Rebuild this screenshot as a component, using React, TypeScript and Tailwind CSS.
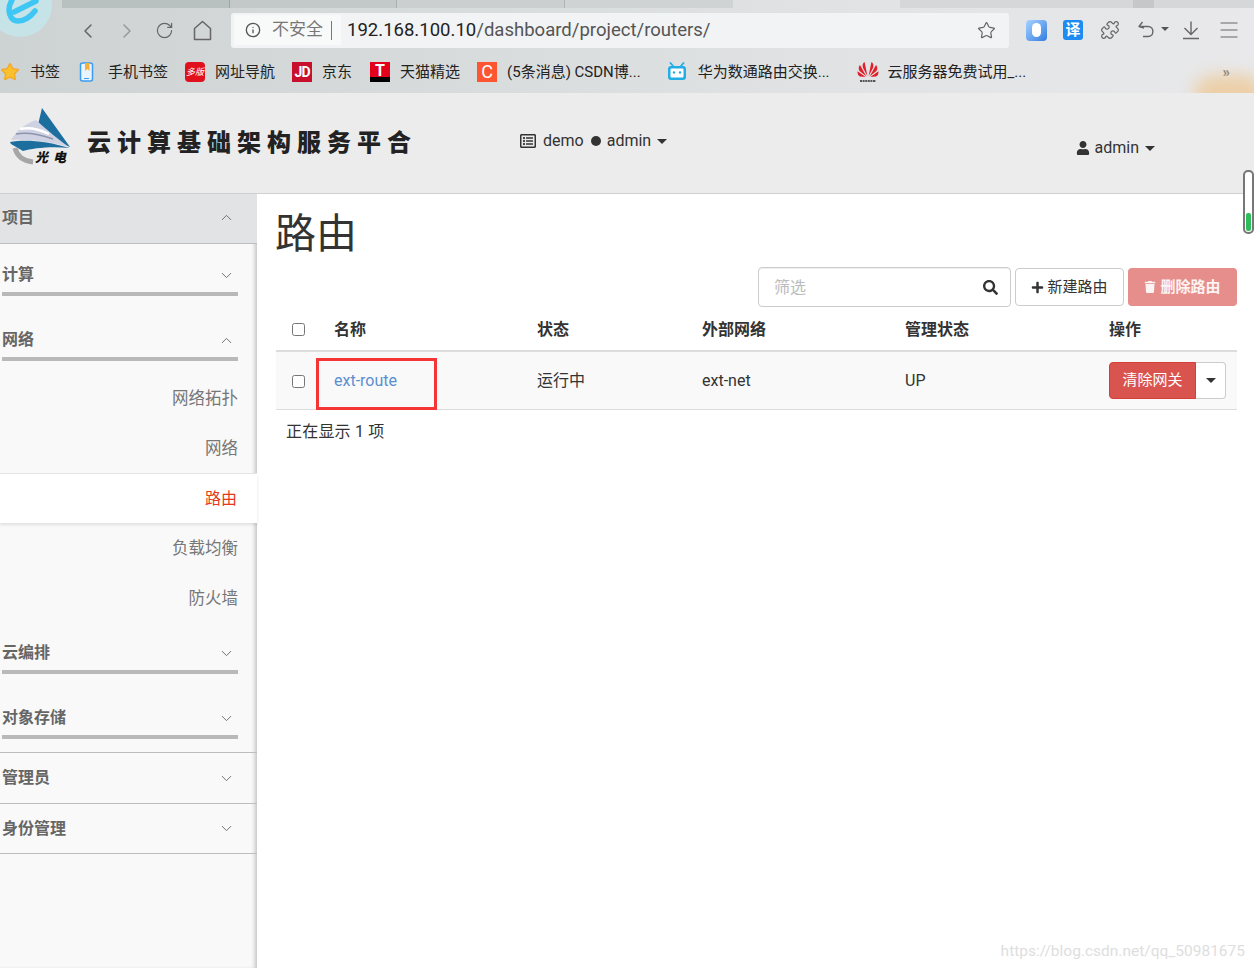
import React from 'react';
import { ChevronLeft, ChevronRight, RotateCw, Star, Puzzle, Menu, Info, ChevronUp, ChevronDown } from 'lucide-react';
import { FaUser, FaTrash, FaPlus, FaSearch, FaRegListAlt } from 'react-icons/fa';

const Caret = ({ className = '' }: { className?: string }) => (
  <span className={`inline-block w-0 h-0 border-x-[5px] border-x-transparent border-t-[5px] border-t-[#333] ${className}`} />
);

const Logo = () => (
  <svg width="62" height="60" viewBox="0 0 62 60" className="shrink-0">
    <path d="M33 2 L61 41 L27 27 Z" fill="#1c6e9e" />
    <path d="M2 34 C8 24 16 18 27 14 C38 24 50 34 60 41 C42 36 22 33 2 34 Z" fill="#cfd2e2" />
    <path d="M11 23 C20 21 30 23 40 28" stroke="#ffffff" strokeWidth="2.5" fill="none" />
    <path d="M7 28 C18 26 30 28 44 33" stroke="#8f94ad" strokeWidth="1.5" fill="none" />
    <path d="M1 36 C16 33 38 35 61 42 C42 40 24 42 14 45 L2 38 Z" fill="#1c6e9e" />
    <path d="M6 42 C8 50 14 55 24 56" stroke="#a6a6a6" strokeWidth="5" fill="none" />
    <text x="26" y="56" fontSize="13" fontWeight="900" fontStyle="italic" letterSpacing="5" fill="#111" fontFamily="'Noto Sans CJK SC', sans-serif">光电</text>
  </svg>
);

const BookmarkIcon = ({ kind }: { kind: string }) => {
  switch (kind) {
    case 'star':
      return <Star size={20} fill="#fbc02d" stroke="#f5a623" strokeWidth={1.5} />;
    case 'phone':
      return (
        <svg width="20" height="20" viewBox="0 0 20 20">
          <rect x="3.5" y="1" width="12" height="18" rx="2" fill="#eaf4ff" stroke="#3b9cf0" strokeWidth="1.5" />
          <path d="M8 1 H12.5 V9 L10.2 7 L8 9 Z" fill="#f5b03c" />
          <path d="M7 16.5 H12" stroke="#3b9cf0" strokeWidth="1" />
        </svg>
      );
    case 'nav':
      return (
        <div className="w-5 h-5 rounded-[4px] bg-[#e0101c] flex items-center justify-center">
          <span className="text-[9px] leading-none text-white italic">多版</span>
        </div>
      );
    case 'jd':
      return <div className="w-5 h-5 bg-[#c8102e] text-white text-[14px] leading-5 text-center font-bold tracking-[-1px]">JD</div>;
    case 'tmall':
      return (
        <div className="w-5 h-5 bg-[#e3001b] relative overflow-hidden text-white text-[16px] leading-[17px] text-center font-bold">
          T
          <div className="absolute inset-x-0 bottom-0 h-[5px] bg-black" />
        </div>
      );
    case 'csdn':
      return <div className="w-5 h-5 bg-[#fc5531] text-white text-[18px] leading-5 text-center">C</div>;
    case 'bili':
      return (
        <svg width="20" height="20" viewBox="0 0 20 20">
          <path d="M6 4 L3.5 1 M14 4 L16.5 1" stroke="#23ade5" strokeWidth="1.8" strokeLinecap="round" />
          <rect x="1" y="4" width="18" height="14" rx="3" fill="#23ade5" />
          <rect x="3.5" y="6.5" width="13" height="9" rx="1" fill="#ffffff" />
          <circle cx="7" cy="10.5" r="1.2" fill="#23ade5" />
          <circle cx="13" cy="10.5" r="1.2" fill="#23ade5" />
        </svg>
      );
    default:
      return (
        <svg width="22" height="22" viewBox="0 0 22 22">
          <g fill="#e0202a">
            <path d="M10.4 15 L7.6 1 C5.6 2 5.2 4.5 6 7 Z" />
            <path d="M11.6 15 L14.4 1 C16.4 2 16.8 4.5 16 7 Z" />
            <path d="M9.4 15.5 L3 4 C1.2 6 1.4 8.6 2.6 10 Z" />
            <path d="M12.6 15.5 L19 4 C20.8 6 20.6 8.6 19.4 10 Z" />
            <path d="M8.6 16 L.6 10.2 C.2 12.6 1.4 14.8 3 15.4 Z" />
            <path d="M13.4 16 L21.4 10.2 C21.8 12.6 20.6 14.8 19 15.4 Z" />
          </g>
          <path d="M3 20 H19" stroke="#555" strokeWidth="2" strokeDasharray="2 .6" />
        </svg>
      );
  }
};

const bookmarks = [
  { kind: 'star', label: '书签', left: 0, gap: 10 },
  { kind: 'phone', label: '手机书签', left: 17, gap: 11 },
  { kind: 'nav', label: '网址导航', left: 17, gap: 10 },
  { kind: 'jd', label: '京东', left: 17, gap: 10 },
  { kind: 'tmall', label: '天猫精选', left: 18, gap: 10 },
  { kind: 'csdn', label: '(5条消息) CSDN博...', left: 17, gap: 10 },
  { kind: 'bili', label: '华为数通路由交换...', left: 26, gap: 11 },
  { kind: 'huawei', label: '云服务器免费试用_...', left: 27, gap: 9 },
];

const BrowserChrome = () => (
  <div className="relative h-[93px] bg-gradient-to-r from-[#cdd2d2] via-[#dcdfe0] to-[#e9e9eb] overflow-hidden">
    <div className="flex h-2 pl-[62px]">
      <div className="w-[168px] bg-[#b9c0c0] border-r border-[#9fa5a5]" />
      <div className="w-[167px] bg-[#c3c8c8] border-r border-[#a9aeae]" />
      <div className="w-[168px] bg-[#cbcfcf] border-r border-[#b0b4b4]" />
      <div className="w-[168px] bg-[#d0d3d4]" />
      <div className="w-[167px]" />
      <div className="w-[233px] bg-[#d6d7d9]" />
      <div className="w-[21px] bg-[#c6c7c9]" />
      <div className="flex-1 bg-[#d6d7d9]" />
    </div>

    <div className="flex items-center h-[42px] pt-[3px] text-[#666]">
      <ChevronLeft size={24} strokeWidth={1.5} className="ml-[76px]" />
      <ChevronRight size={24} strokeWidth={1.5} className="ml-[15px] text-[#999]" />
      <RotateCw size={19} strokeWidth={1.5} className="ml-[16px]" />
      <svg width="21" height="21" viewBox="0 0 21 21" fill="none" stroke="currentColor" strokeWidth="1.5" className="ml-[18px]">
        <path d="M2.5 19.5 V8.5 L10.5 1.5 L18.5 8.5 V19.5 Z" strokeLinejoin="round" />
      </svg>
      <div className="ml-[18px] w-[778px] h-[35px] mt-[-1px] rounded-[3px] bg-[#f1f3f4] flex items-center">
        <div className="ml-[3px] w-[107px] h-[30px] bg-[#f8fafa] flex items-center text-[#555]">
          <Info size={16} strokeWidth={2} className="ml-[11px]" />
          <span className="ml-[11px] text-[17px] text-[#777]">不安全</span>
          <span className="ml-[8px] w-px h-[19px] bg-[#777]" />
        </div>
        <div className="ml-[6px] pt-[2px] text-[18.55px] text-[#555] whitespace-nowrap">
          <span className="text-[#222]">192.168.100.10</span>/dashboard/project/routers/
        </div>
        <Star size={19} strokeWidth={1.5} className="ml-auto mr-[13px]" />
      </div>
      <div className="ml-[17px] w-[21px] h-[21px] mt-[-1px] rounded-[4px] bg-gradient-to-br from-[#a8d2ff] to-[#2f7de0] flex items-center justify-center">
        <div className="w-[9px] h-[14px] rounded-full bg-white" />
      </div>
      <div className="ml-[16px] w-5 h-5 mt-[-1px] rounded-[3px] bg-[#1c8cf2] text-white text-[15px] leading-5 text-center font-bold">译</div>
      <Puzzle size={20} strokeWidth={1.5} className="ml-[17px] mt-[-1px]" />
      <svg width="20" height="20" viewBox="0 0 20 20" fill="none" stroke="currentColor" strokeWidth="1.4" className="ml-[17px] mt-[-1px]">
        <path d="M5.5 2 L2 6.5 L7 8 M2.5 6.5 H11 C17.5 6.5 17.5 16.5 11 16.5 H6" strokeLinejoin="round" />
      </svg>
      <span className="ml-[4px] mt-[-3px] w-0 h-0 border-x-[4px] border-x-transparent border-t-[4px] border-t-[#555]" />
      <svg width="20" height="20" viewBox="0 0 20 20" fill="none" stroke="currentColor" strokeWidth="1.4" className="ml-[12px] mt-[-1px]">
        <path d="M10 1.5 V14 M3.5 8 L10 14.5 L16.5 8 M2 18.5 H18" />
      </svg>
      <Menu size={24} strokeWidth={1.2} className="ml-[16px] mt-[-1px]" />
    </div>

    <div className="flex items-center h-[43px] pt-[3px] text-[15px] text-[#222] whitespace-nowrap -mt-px">
      {bookmarks.map((b) => (
        <div key={b.label} className="flex items-center" style={{ marginLeft: b.left }}>
          <BookmarkIcon kind={b.kind} />
          <span style={{ marginLeft: b.gap }}>{b.label}</span>
        </div>
      ))}
      <span className="ml-auto mr-[24px] text-[#555] font-bold">»</span>
    </div>

    {/* browser logo, cut by the window corner */}
    <svg width="56" height="40" viewBox="0 0 56 40" className="absolute left-0 top-0">
      <circle cx="20" cy="5" r="32" fill="#c6e3e8" />
      <path d="M12 0 C6 10 10 21 18 21 C25 21 31 16 35 11" stroke="#3ec6f5" strokeWidth="5.5" fill="none" strokeLinecap="round" />
      <path d="M14 12 L36 1" stroke="#3ec6f5" strokeWidth="5.5" fill="none" strokeLinecap="round" />
    </svg>
    <div className="absolute -right-[10px] -bottom-[22px] w-[70px] h-[40px] rounded-full bg-[#eccfa8] blur-[8px]" />
  </div>
);

const Header = () => (
  <header className="h-[101px] bg-[#ececec] border-b border-[#cfcfcf] flex items-start">
    <div className="ml-[9px] mt-[13px]">
      <Logo />
    </div>
    <div className="ml-[16px] mt-[32px] w-[340px] text-[24px] leading-[36px] font-black tracking-[6px] text-[#222] whitespace-nowrap">
      云计算基础架构服务平合
    </div>
    <div className="ml-[93px] mt-[36px] flex items-center text-[16px] leading-6 text-[#333]">
      <FaRegListAlt size={16} />
      <span className="ml-[7px]">demo</span>
      <span className="ml-[7px] w-[10px] h-[10px] rounded-full bg-[#333]" />
      <span className="ml-[6px]">admin</span>
      <Caret className="ml-[6px]" />
    </div>
    <div className="ml-auto mr-[99px] mt-[43px] flex items-center text-[16px] leading-6 text-[#333]">
      <FaUser size={14} />
      <span className="ml-[5px]">admin</span>
      <Caret className="ml-[6px]" />
    </div>
  </header>
);

const Section = ({ label, open = false, className = '' }: { label: string; open?: boolean; className?: string }) => (
  <div className={`flex items-center justify-between h-6 pl-[2px] pr-[22px] text-[16px] font-bold text-[#666] ${className}`}>
    <span>{label}</span>
    {open ? <ChevronUp size={17} strokeWidth={1.3} /> : <ChevronDown size={17} strokeWidth={1.3} />}
  </div>
);

const Bar = () => <div className="ml-[2px] mr-[19px] mt-[5px] h-1 bg-[#b9b9b9]" />;

const SubItem = ({ label }: { label: string }) => (
  <div className="h-[50px] pt-[2px] pr-[19px] flex items-center justify-end text-[16.5px] text-[#777]">{label}</div>
);

const Sidebar = () => (
  <aside className="w-[257px] shrink-0 bg-[#f9f9f9] shadow-[inset_-4px_0_4px_-2px_rgba(0,0,0,0.22)]">
    <div className="h-[50px] pb-[2px] bg-[#e2e3e5] border-b border-[#bdbdbd] flex items-center">
      <Section label="项目" open className="w-full" />
    </div>
    <div className="pt-[19px]">
      <Section label="计算" />
      <Bar />
    </div>
    <div className="pt-[32px]">
      <Section label="网络" open />
      <Bar />
    </div>
    <div className="pt-[12px]">
      <SubItem label="网络拓扑" />
      <SubItem label="网络" />
      <div className="h-[50px] pr-[20px] bg-white border-t border-[#e5e5e5] shadow-[0_2px_3px_rgba(0,0,0,0.1)] relative flex items-center justify-end text-[16px] text-[#e5391c]">
        路由
      </div>
      <SubItem label="负载均衡" />
      <SubItem label="防火墙" />
    </div>
    <div className="pt-[18px]">
      <Section label="云编排" />
      <Bar />
    </div>
    <div className="pt-[32px] pb-[13px] border-b border-[#bdbdbd]">
      <Section label="对象存储" />
      <Bar />
    </div>
    <div className="h-[51px] border-b border-[#bdbdbd] flex items-center">
      <Section label="管理员" className="w-full" />
    </div>
    <div className="h-[50px] border-b border-[#bdbdbd] flex items-center">
      <Section label="身份管理" className="w-full" />
    </div>
  </aside>
);

const tableCols = 'grid grid-cols-[50px_203px_165px_203px_204px_136px] items-center';

const Content = () => (
  <main className="flex-1 pl-[19px] pr-[17px] text-[#333]">
    <h1 className="pt-[16px] -ml-[1px] text-[41px] leading-[48px] text-[#333]">路由</h1>

    <div className="mt-[9px] h-10 flex items-center justify-end">
      <div className="w-[253px] h-10 pt-[1px] border border-[#ccc] rounded-[4px] shadow-[inset_0_1px_1px_rgba(0,0,0,0.07)] flex items-center justify-between pl-[15px] pr-[12px]">
        <span className="text-[16px] text-[#bbb]">筛选</span>
        <FaSearch size={15} className="text-[#333]" />
      </div>
      <button className="ml-[4px] w-[109px] h-[38px] border border-[#ccc] rounded-[4px] bg-white flex items-center justify-center text-[15px] text-[#333]">
        <FaPlus size={13} />
        <span className="ml-[3px]">新建路由</span>
      </button>
      <button className="ml-[4px] w-[109px] h-[38px] rounded-[4px] bg-[#e58e8b] flex items-center justify-center text-[15px] font-bold text-white/90">
        <FaTrash size={12} />
        <span className="ml-[4px]">删除路由</span>
      </button>
    </div>

    <div className={`${tableCols} h-[45px] pt-[2px] border-b-2 border-[#ddd] text-[16px] font-bold`}>
      <div className="pl-[16px] flex">
        <input type="checkbox" className="w-[13px] h-[13px] m-0" readOnly />
      </div>
      <div className="pl-[8px]">名称</div>
      <div className="pl-[8px]">状态</div>
      <div className="pl-[8px]">外部网络</div>
      <div className="pl-[8px]">管理状态</div>
      <div className="pl-[8px]">操作</div>
    </div>

    <div className={`${tableCols} h-[58px] bg-[#f9f9f9] border-b border-[#ddd] text-[16px]`}>
      <div className="pl-[16px] pt-[2px] flex">
        <input type="checkbox" className="w-[13px] h-[13px] m-0" readOnly />
      </div>
      <div className="pl-[8px] relative">
        <span className="text-[#5b8fd0]">ext-route</span>
        <div className="absolute left-[-10px] top-[-11px] w-[121px] h-[52px] border-[3px] border-[#f33535]" />
      </div>
      <div className="pl-[8px]">运行中</div>
      <div className="pl-[8px]">ext-net</div>
      <div className="pl-[8px]">UP</div>
      <div className="pl-[8px] flex">
        <button className="w-[87px] h-[37px] rounded-l-[4px] bg-[#d9534f] border border-[#d43f3a] text-white text-[15px]">清除网关</button>
        <button className="w-[30px] h-[37px] rounded-r-[4px] bg-white border border-l-0 border-[#ccc] flex items-center justify-center">
          <Caret />
        </button>
      </div>
    </div>

    <div className="pl-[10px] pt-[10px] text-[16px] tracking-[0.2px] leading-6">正在显示 1 项</div>
  </main>
);

const App: React.FC = () => (
  <div className="relative w-[1254px] h-[968px] overflow-hidden bg-white flex flex-col font-['Roboto','Noto_Sans_CJK_SC',sans-serif]">
    <BrowserChrome />
    <Header />
    <div className="flex flex-1">
      <Sidebar />
      <Content />
    </div>

    {/* floating scroll indicator and blog watermark lie over the page */}
    <div className="absolute left-[1243px] top-[170px] w-[11px] h-[64px] rounded-[5px] border-2 border-[#777] bg-white overflow-hidden flex flex-col justify-end items-center pb-[1px]">
      <div className="w-[5px] h-[18px] rounded-[2px] bg-[#2dbd5a]" />
    </div>
    <div className="absolute right-[9px] top-[940px] text-[15.5px] text-[#dedede] whitespace-nowrap">https://blog.csdn.net/qq_50981675</div>
  </div>
);

export default App;
